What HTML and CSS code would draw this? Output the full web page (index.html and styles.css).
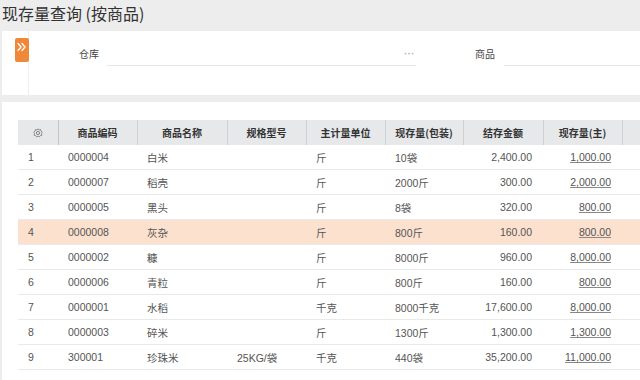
FILE: index.html
```html
<!DOCTYPE html>
<html lang="zh-CN">
<head>
<meta charset="utf-8">
<title>现存量查询 (按商品)</title>
<link rel="stylesheet" href="styles.css">
</head>
<body>
<div class="page">
  <h1 class="title">现存量查询 (按商品)</h1>
  <div class="filter">
    <div class="strip">
      <div class="toggle">
        <svg width="14" height="14" viewBox="0 0 14 14"><path d="M3 3.5 L6 7 L3 10.5 M7 3.5 L10 7 L7 10.5" fill="none" stroke="#fff" stroke-width="1.3" stroke-linecap="round" stroke-linejoin="round"/></svg>
      </div>
    </div>
    <div class="fields">
      <span class="label">仓库</span>
      <div class="input wide"><span class="dots">···</span></div>
      <span class="label second">商品</span>
      <div class="input rest"></div>
    </div>
  </div>
  <div class="grid-panel">
    <table class="grid">
      <colgroup>
        <col class="c-idx"><col class="c-code"><col class="c-name"><col class="c-spec"><col class="c-unit"><col class="c-pack"><col class="c-amt"><col class="c-qty"><col class="c-extra">
      </colgroup>
      <thead>
        <tr>
          <th><svg class="gear" width="10" height="10" viewBox="0 0 10 10"><circle cx="5" cy="5" r="1.6" fill="none" stroke="#777" stroke-width="0.9"/><path d="M5 0.8 L6 2 L7.6 1.6 L7.9 3.2 L9.2 4.2 L8.5 5.6 L9 7.2 L7.4 7.5 L6.4 8.9 L5 8.1 L3.6 8.9 L2.6 7.5 L1 7.2 L1.5 5.6 L0.8 4.2 L2.1 3.2 L2.4 1.6 L4 2 Z" fill="none" stroke="#777" stroke-width="0.8" stroke-linejoin="round"/></svg></th>
          <th>商品编码</th>
          <th>商品名称</th>
          <th>规格型号</th>
          <th>主计量单位</th>
          <th>现存量(包装)</th>
          <th>结存金额</th>
          <th>现存量(主)</th>
          <th></th>
        </tr>
      </thead>
      <tbody>
        <tr><td>1</td><td>0000004</td><td>白米</td><td></td><td>斤</td><td>10袋</td><td class="num">2,400.00</td><td class="num"><span class="link">1,000.00</span></td><td></td></tr>
        <tr><td>2</td><td>0000007</td><td>稻壳</td><td></td><td>斤</td><td>2000斤</td><td class="num">300.00</td><td class="num"><span class="link">2,000.00</span></td><td></td></tr>
        <tr><td>3</td><td>0000005</td><td>黑头</td><td></td><td>斤</td><td>8袋</td><td class="num">320.00</td><td class="num"><span class="link">800.00</span></td><td></td></tr>
        <tr class="selected"><td>4</td><td>0000008</td><td>灰杂</td><td></td><td>斤</td><td>800斤</td><td class="num">160.00</td><td class="num"><span class="link">800.00</span></td><td></td></tr>
        <tr><td>5</td><td>0000002</td><td>糠</td><td></td><td>斤</td><td>8000斤</td><td class="num">960.00</td><td class="num"><span class="link">8,000.00</span></td><td></td></tr>
        <tr><td>6</td><td>0000006</td><td>青粒</td><td></td><td>斤</td><td>800斤</td><td class="num">160.00</td><td class="num"><span class="link">800.00</span></td><td></td></tr>
        <tr><td>7</td><td>0000001</td><td>水稻</td><td></td><td>千克</td><td>8000千克</td><td class="num">17,600.00</td><td class="num"><span class="link">8,000.00</span></td><td></td></tr>
        <tr><td>8</td><td>0000003</td><td>碎米</td><td></td><td>斤</td><td>1300斤</td><td class="num">1,300.00</td><td class="num"><span class="link">1,300.00</span></td><td></td></tr>
        <tr><td>9</td><td>300001</td><td>珍珠米</td><td>25KG/袋</td><td>千克</td><td>440袋</td><td class="num">35,200.00</td><td class="num"><span class="link">11,000.00</span></td><td></td></tr>
      </tbody>
    </table>
  </div>
</div>
</body>
</html>
```

FILE: styles.css
```css
html, body {
  margin: 0;
  padding: 0;
  height: 100%;
  overflow: hidden;
  background: #ededed;
}
body {
  font-family: "Liberation Sans", "Noto Sans CJK SC", sans-serif;
  color: #555;
}
.page {
  margin-left: 2px;
  height: 100%;
  display: flex;
  flex-direction: column;
  overflow: hidden;
}
.title {
  margin: 0;
  height: 31px;
  line-height: 27px;
  font-size: 16px;
  font-weight: normal;
  color: #333;
  font-family: "Noto Sans CJK SC", sans-serif;
}
.filter {
  background: #fff;
  height: 64px;
  display: flex;
  overflow: hidden;
}
.strip {
  width: 27px;
  flex: none;
  border-right: 1px solid #eeeeee;
  padding-top: 7px;
  padding-left: 13px;
  box-sizing: border-box;
}
.toggle {
  width: 14px;
  height: 24px;
  background: #f0883a;
  border-radius: 2px;
  display: flex;
  justify-content: center;
  padding-top: 2px;
  box-sizing: border-box;
}
.fields {
  display: flex;
  align-items: flex-start;
  padding-left: 50px;
  padding-top: 11px;
  flex: 1;
}
.label {
  flex: none;
  width: 28px;
  height: 24px;
  line-height: 24px;
  font-size: 10px;
  color: #444;
  font-family: "Noto Sans CJK SC", sans-serif;
}
.label.second {
  margin-left: 59px;
  width: 29px;
}
.input {
  height: 23px;
  border-bottom: 1px solid #e6e6e6;
  display: flex;
  justify-content: flex-end;
  align-items: center;
}
.input.wide {
  flex: none;
  width: 309px;
}
.input.rest {
  flex: 1;
}
.dots {
  font-size: 12px;
  line-height: 12px;
  color: #a89c80;
  padding-right: 2px;
  padding-bottom: 2px;
  letter-spacing: -0.5px;
}
.grid-panel {
  margin-top: 7px;
  background: #fff;
  flex: 1;
  padding-top: 18px;
  padding-left: 16px;
  overflow: hidden;
}
.grid {
  border-collapse: collapse;
  table-layout: fixed;
  width: 634px;
  font-size: 10.5px;
}
.c-idx { width: 40px; }
.c-code { width: 79px; }
.c-name { width: 90px; }
.c-spec { width: 79px; }
.c-unit { width: 79px; }
.c-pack { width: 78px; }
.c-amt { width: 80px; }
.c-qty { width: 79px; }
.c-extra { width: 30px; }
.grid th {
  height: 25px;
  padding: 0;
  background: #e6e8ea;
  border-right: 1px solid #cfd2d4;
  color: #333;
  font-weight: bold;
  font-size: 10px;
  text-align: center;
  font-family: "Noto Sans CJK SC", sans-serif;
}
.grid th:first-child {
  border-right-color: #c4c6c8;
}
.gear {
  display: block;
  margin: 0 auto;
}
.grid td {
  height: 24px;
  padding: 0 10px;
  border-bottom: 1px solid #e9e9e9;
  white-space: nowrap;
  overflow: hidden;
  color: #555;
}
.grid td.num {
  text-align: right;
  padding-right: 11px;
}
.link {
  text-decoration: underline;
  text-decoration-color: #888;
}
.grid tr.selected td {
  background: #fce1cf;
}
```
